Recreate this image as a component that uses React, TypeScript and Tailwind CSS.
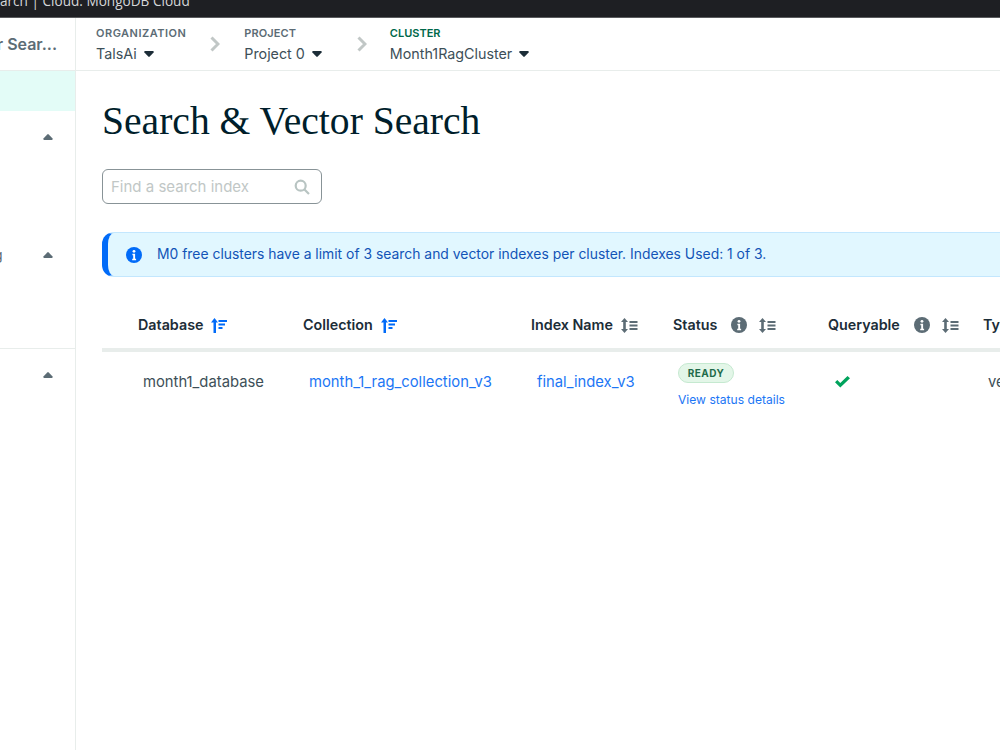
const sans = "font-['Inter','Liberation_Sans',sans-serif]";

function Caret({ className = "" }: { className?: string }) {
  return (
    <svg width="10" height="6" viewBox="0 0 10 6" className={className} fill="currentColor">
      <path d="M4.3.4a1 1 0 0 1 1.4 0L9.6 4.6c.4.5.1 1.4-.7 1.4H1.1C.3 6 0 5.100.4 4.600z" />
    </svg>
  );
}

function Chevron() {
  return (
    <svg width="10" height="16" viewBox="0 0 10 16" fill="none" stroke="#c1c7c6" strokeWidth="3">
      <path d="M1.500 1.500 8 8l-6.500 6.500" />
    </svg>
  );
}

function SortActive() {
  return (
    <svg width="16" height="15" viewBox="0 0 16 15" fill="#016bf8">
      <path d="M3.500 0 7 4.500H5V15H2.500V4.500H0z" />
      <rect x="7.500" y="2" width="8.500" height="2" />
      <rect x="7.500" y="5.500" width="6.500" height="2" />
      <rect x="7.500" y="9" width="4" height="2" />
    </svg>
  );
}

function SortIdle() {
  return (
    <svg width="17" height="15" viewBox="0 0 17 15" fill="#5c6c75">
      <path d="M3.500 0 7 4H4.800v7H7l-3.500 4L0 11h2.200V4H0z" />
      <rect x="8.500" y="3" width="8" height="2" />
      <rect x="8.500" y="6.500" width="8" height="2" />
      <rect x="8.500" y="10" width="8" height="2" />
    </svg>
  );
}

function InfoDot({ color, size = 16 }: { color: string; size?: number }) {
  return (
    <svg width={size} height={size} viewBox="0 0 16 16">
      <circle cx="8" cy="8" r="8" fill={color} />
      <circle cx="8" cy="4.300" r="1.400" fill="#fff" />
      <path d="M6.400 6.700h2.700v5h1v1.500H6.200v-1.500h1v-3.500h-.8z" fill="#fff" />
    </svg>
  );
}

function NavItem({ label, value, labelClass }: { label: string; value: string; labelClass: string }) {
  return (
    <div className="flex flex-col pt-[1px]">
      <span className={`text-[11px] leading-[14px] font-semibold ${labelClass}`}>{label}</span>
      <span className="mt-[4px] flex items-center gap-[7px] text-[14.300px] leading-[20px] text-[#3d4f58]">
        {value}
        <Caret className="rotate-180 text-[#1c2d38]" />
      </span>
    </div>
  );
}

function Head({ label, children, className }: { label: string; children: React.ReactNode; className: string }) {
  return (
    <div className={`flex h-[46px] items-center text-[14.300px] font-semibold text-[#1c2d38] ${className}`}>
      <span className="mr-[8px]">{label}</span>
      {children}
    </div>
  );
}

export default function App() {
  return (
    <div className={`flex h-[750px] w-[1000px] flex-col overflow-hidden bg-white ${sans}`}>
      <div className="h-[18px] shrink-0 overflow-hidden border-b border-[#5a5b5e] bg-[#1e1f23]">
        <div className="-mt-[8px] font-['Open_Sans',sans-serif] text-[13.600px] leading-[18px] whitespace-nowrap text-[#d5d6d8]">
          arch | Cloud: MongoDB Cloud
        </div>
      </div>

      <div className="flex min-h-0 flex-1">
        <aside className="w-[76px] shrink-0 overflow-hidden border-r border-[#e8edeb]">
          <div className="flex h-[53px] items-center justify-end border-b border-[#e8edeb] pr-[18px] text-[16px] font-semibold whitespace-nowrap text-[#5c6c75]">
            r Sear...
          </div>
          <div className="h-[40px] bg-[#e3fcf7]" />
          <div className="flex h-[118px] justify-end pt-[23px] pr-[22px] text-[#5c6c75]">
            <Caret />
          </div>
          <div className="flex h-[119px] items-start justify-between pt-[23px] pr-[22px] text-[#5c6c75]">
            <span className="-mt-[7px] -ml-[6px] text-[14px] leading-[20px]">g</span>
            <Caret />
          </div>
          <div className="flex h-[60px] justify-end border-t border-[#e8edeb] pt-[23px] pr-[22px] text-[#5c6c75]">
            <Caret />
          </div>
        </aside>

        <div className="flex min-w-0 flex-1 flex-col">
          <nav className="flex h-[53px] shrink-0 items-center border-b border-[#e8edeb] pl-[20px]">
            <NavItem label="ORGANIZATION" value="TalsAi" labelClass="tracking-[0.5px] text-[#5c6c75]" />
            <div className="mr-[24px] ml-[24px]"><Chevron /></div>
            <NavItem label="PROJECT" value="Project 0" labelClass="tracking-[0.1px] text-[#5c6c75]" />
            <div className="mr-[23px] ml-[35px]"><Chevron /></div>
            <NavItem label="CLUSTER" value="Month1RagCluster" labelClass="tracking-[0px] text-[#00684a]" />
          </nav>

          <main className="min-h-0 flex-1 pl-[26px]">
            <h1 className="mt-[27px] font-['Liberation_Serif',serif] text-[39.600px] leading-[46px] whitespace-nowrap text-[#001e2b]">
              Search &amp; Vector Search
            </h1>

            <div className="mt-[25px] flex h-[35px] w-[220px] items-center justify-between rounded-[6px] border border-[#889397] pr-[11px] pl-[8px]">
              <span className="pt-[1px] text-[15px] text-[#c1c7c6]">Find a search index</span>
              <svg width="16" height="16" viewBox="0 0 16 16" fill="none" stroke="#b8c4c2" strokeWidth="2.200">
                <circle cx="6.700" cy="6.700" r="5" />
                <path d="m10.500 10.500 4.500 4.500" />
              </svg>
            </div>

            <div className="mt-[28px] flex h-[45px] w-[950px] items-center rounded-l-[12px] border border-l-[6px] border-[#c3e7fe] border-l-[#016bf8] bg-[#e1f7ff] pl-[18px]">
              <InfoDot color="#016bf8" />
              <span className="ml-[15px] text-[13.900px] whitespace-nowrap text-[#1254b7]">
                M0 free clusters have a limit of 3 search and vector indexes per cluster. Indexes Used: 1 of 3.
              </span>
            </div>

            <div className="mt-[25px] grid w-[1000px] grid-cols-[201px_228px_142px_155px_155px_119px]">
              <Head label="Database" className="pl-[36px]"><SortActive /></Head>
              <Head label="Collection" className=""><SortActive /></Head>
              <Head label="Index Name" className=""><SortIdle /></Head>
              <Head label="Status" className="">
                <span className="mr-[12px] ml-[6px]"><InfoDot color="#5c6c75" /></span>
                <SortIdle />
              </Head>
              <Head label="Queryable" className="">
                <span className="mr-[12px] ml-[6px]"><InfoDot color="#5c6c75" /></span>
                <SortIdle />
              </Head>
              <Head label="Type" className=""><SortIdle /></Head>

              <div className="col-span-6 h-[4px] bg-[#e8edeb]" />

              <div className="flex h-[60px] items-center pl-[41px] text-[14.800px] text-[#3d4f58]">month1_database</div>
              <div className="flex h-[60px] items-center pl-[6px] text-[14.800px] text-[#1c76f5]">month_1_rag_collection_v3</div>
              <div className="flex h-[60px] items-center pl-[6px] text-[14.800px] text-[#1c76f5]">final_index_v3</div>
              <div className="flex h-[60px] flex-col items-start pt-[11px] pl-[5px]">
                <span className="flex h-[20px] w-[56px] items-center justify-center rounded-full border border-[#c5e9d0] bg-[#e3f6e8] text-[10px] font-bold tracking-[0.5px] text-[#1f6b4a]">
                  READY
                </span>
                <span className="mt-[9px] text-[12.100px] leading-[16px] text-[#1c76f5]">View status details</span>
              </div>
              <div className="flex h-[60px] items-center pl-[7px]">
                <svg width="15" height="12" viewBox="0 0 15 12" fill="#00a35c">
                  <path d="M5.300 11.500 0 6.300l2.300-2.200 3 2.900L12.500 0 15 2.200z" />
                </svg>
              </div>
              <div className="flex h-[60px] items-center pl-[5px] text-[14.800px] text-[#3d4f58]">vector</div>
            </div>
          </main>
        </div>
      </div>
    </div>
  );
}
